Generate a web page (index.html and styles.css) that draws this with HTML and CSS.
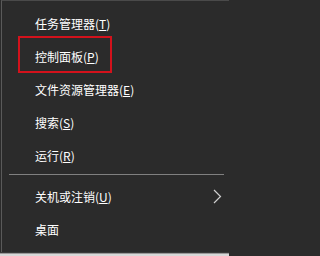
FILE: index.html
```html
<!DOCTYPE html>
<html lang="zh-CN">
<head>
<meta charset="utf-8">
<link rel="stylesheet" href="styles.css">
</head>
<body>
<div class="menu">
  <div class="item">任务管理器(<u>T</u>)</div>
  <div class="item">控制面板(<u>P</u>)</div>
  <div class="item">文件资源管理器(<u>E</u>)</div>
  <div class="item">搜索(<u>S</u>)</div>
  <div class="item">运行(<u>R</u>)</div>
  <div class="sep"></div>
  <div class="item">关机或注销(<u>U</u>)
    <svg class="chev" width="9" height="15" viewBox="0 0 9 15"><polyline points="1,1 7.5,7.5 1,14" fill="none" stroke="#d0d0d0" stroke-width="1.2"/></svg>
  </div>
  <div class="item">桌面</div>
  <div class="highlight"></div>
</div>
<div class="bottom"></div>
</body>
</html>
```
FILE: styles.css
```css
html, body {
  margin: 0;
  padding: 0;
  background: #2b2b2b;
}
body {
  width: 229px;
  height: 256px;
  overflow: hidden;
  font-family: "Noto Sans CJK SC", "Noto Sans", sans-serif;
  font-size: 12px;
  color: #ffffff;
}
.menu {
  position: relative;
  height: 252px;
  box-sizing: border-box;
  border-top: 1px solid #4a4a4a;
  border-left: 1px solid #5a5a5a;
  margin-left: 1px;
  padding-top: 6px;
  display: flex;
  flex-direction: column;
}
.item {
  height: 33px;
  display: flex;
  align-items: center;
  padding-left: 33px;
  padding-right: 7px;
  line-height: 1;
  white-space: nowrap;
}
.item u {
  text-decoration-thickness: 1px;
  text-underline-offset: 1px;
}
.chev {
  margin-left: auto;
}
.sep {
  height: 1px;
  margin: 2px 5px 5px 7px;
  background: #808080;
}
.highlight {
  position: absolute;
  left: 16px;
  top: 35px;
  width: 90px;
  height: 33px;
  border: 2px solid #d3121c;
}
.bottom {
  height: 4px;
  background: linear-gradient(#3a3a3a 0 1px, #9a9a9a 1px 2px, #d8d8d8 2px);
}
```
